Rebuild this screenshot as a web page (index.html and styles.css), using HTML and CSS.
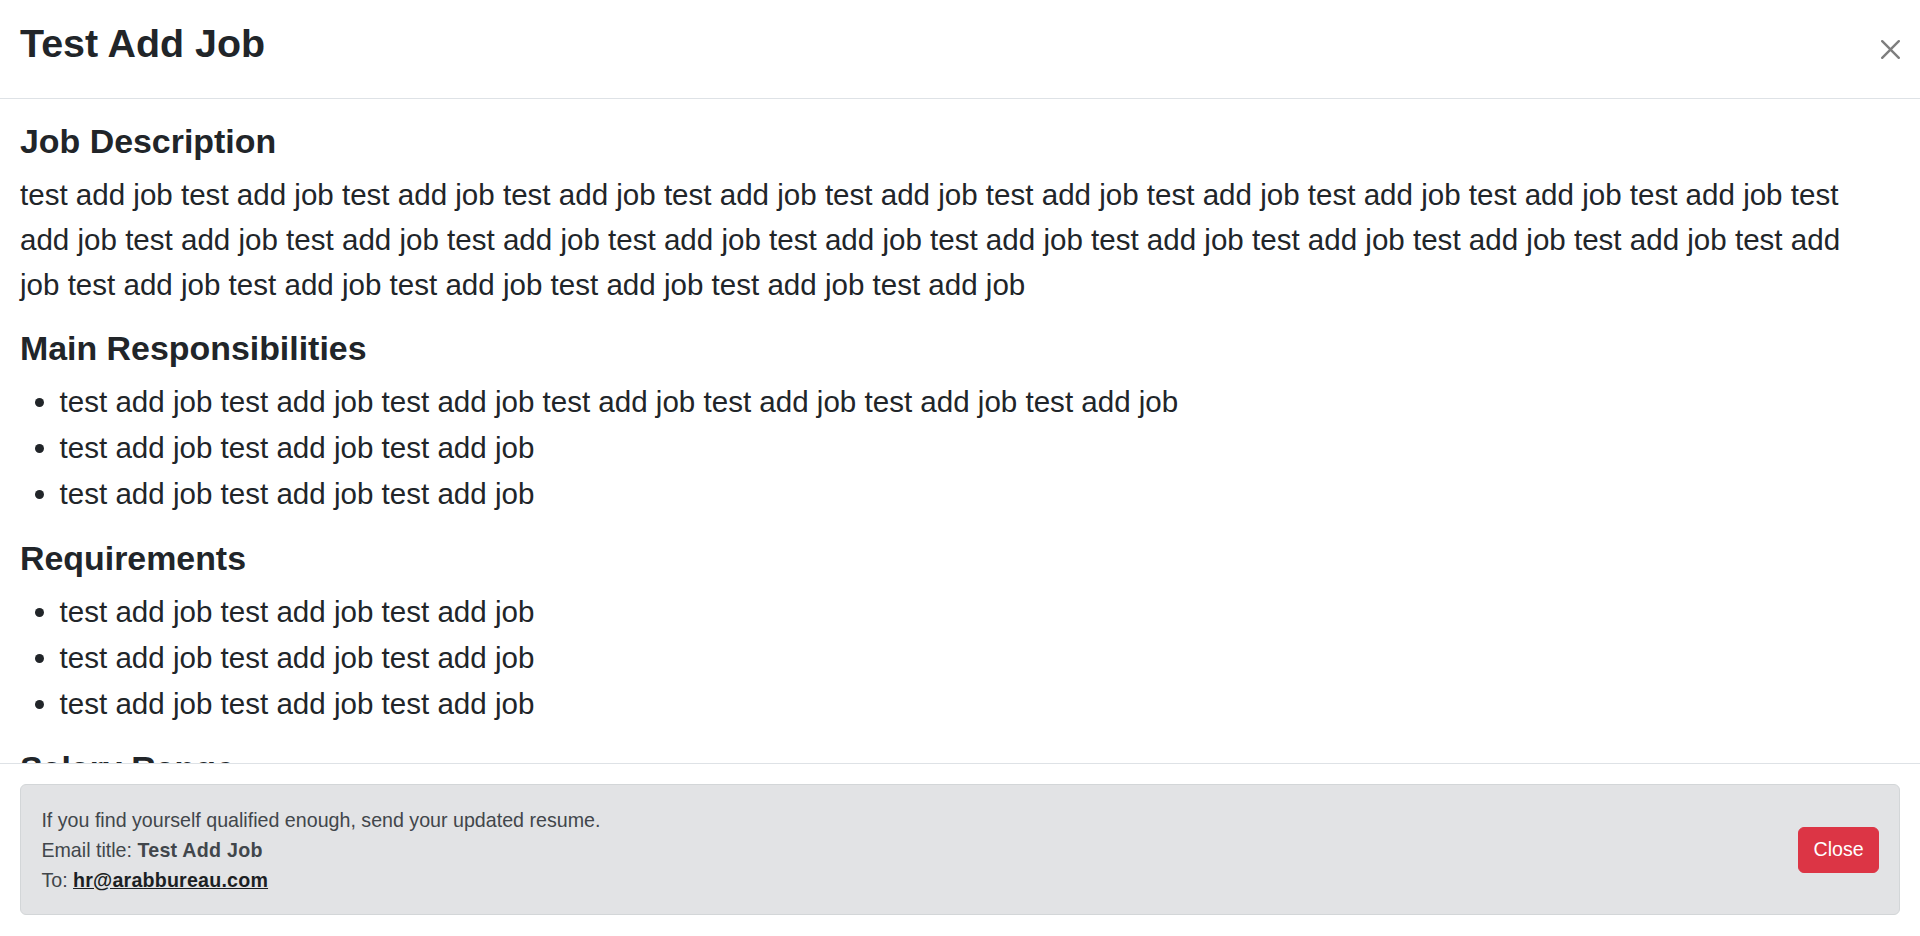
FILE: index.html
```html
<!DOCTYPE html>
<html lang="en">
<head>
<meta charset="utf-8">
<title>Test Add Job</title>
<link rel="stylesheet" href="styles.css">
</head>
<body>
<div class="modal">
  <header class="modal-header">
    <h1 class="modal-title">Test Add Job</h1>
    <button class="btn-close" type="button" aria-label="Close">
      <svg viewBox="0 0 16 16" width="19" height="19"><path d="M.293.293a1 1 0 0 1 1.414 0L8 6.586 14.293.293a1 1 0 1 1 1.414 1.414L9.414 8l6.293 6.293a1 1 0 0 1-1.414 1.414L8 9.414l-6.293 6.293a1 1 0 0 1-1.414-1.414L6.586 8 .293 1.707a1 1 0 0 1 0-1.414z"/></svg>
    </button>
  </header>
  <main class="modal-body">
    <h3 class="section-title">Job Description</h3>
    <p class="text">test add job test add job test add job test add job test add job test add job test add job test add job test add job test add job test add job test add job test add job test add job test add job test add job test add job test add job test add job test add job test add job test add job test add job test add job test add job test add job test add job test add job test add job</p>
    <h3 class="section-title">Main Responsibilities</h3>
    <ul class="list">
      <li>test add job test add job test add job test add job test add job test add job test add job</li>
      <li>test add job test add job test add job</li>
      <li>test add job test add job test add job</li>
    </ul>
    <h3 class="section-title">Requirements</h3>
    <ul class="list">
      <li>test add job test add job test add job</li>
      <li>test add job test add job test add job</li>
      <li>test add job test add job test add job</li>
    </ul>
    <h3 class="section-title">Salary Range</h3>
    <p class="text">1000 - 2000</p>
  </main>
  <footer class="modal-footer">
    <div class="alert">
      <div class="alert-text">
        <div class="alert-line">If you find yourself qualified enough, send your updated resume.</div>
        <div class="alert-line">Email title: <b>Test Add Job</b></div>
        <div class="alert-line">To: <a class="alert-link" href="#">hr@arabbureau.com</a></div>
      </div>
      <button class="btn-danger" type="button">Close</button>
    </div>
  </footer>
</div>
</body>
</html>
```

FILE: styles.css
```css
* { box-sizing: border-box; }
html, body {
  margin: 0;
  padding: 0;
  height: 100%;
  background: #fff;
}
body {
  font-family: "Liberation Sans", Arial, sans-serif;
  color: #212529;
  overflow: hidden;
}
.modal {
  display: flex;
  flex-direction: column;
  height: 936px;
  width: 1920px;
}
.modal-header {
  display: flex;
  align-items: flex-start;
  height: 99px;
  padding: 21px 20px 0 20px;
  border-bottom: 1px solid #dee2e6;
  flex-shrink: 0;
}
.modal-title {
  margin: 0;
  font-size: 39.4px;
  line-height: 45px;
  font-weight: 700;
  color: #212529;
}
.btn-close {
  margin-left: auto;
  align-self: center;
  margin-top: -21px;
  width: 19px;
  height: 19px;
  padding: 0;
  border: 0;
  background: transparent;
  opacity: .5;
  display: flex;
}
.btn-close svg { fill: #000; display: block; }
.modal-body {
  flex: 1;
  overflow: hidden;
  padding: 22px 48px 0 20px;
}
.section-title {
  margin: 0 0 10px 0;
  font-size: 33.9px;
  line-height: 41.2px;
  font-weight: 700;
}
.text {
  margin: 0 0 20.75px 0;
  font-size: 29.55px;
  line-height: 45px;
}
.list {
  margin: 0 0 20.75px 0;
  padding-left: 39.6px;
  font-size: 29.55px;
  line-height: 46px;
}
.modal-footer {
  flex-shrink: 0;
  border-top: 1px solid #dee2e6;
  padding: 20px 20px 21px 20px;
}
.alert {
  display: flex;
  align-items: center;
  justify-content: space-between;
  background: #e2e3e5;
  border: 1px solid #d3d6d8;
  border-radius: 6px;
  padding: 19.5px 20px 19.5px 20.4px;
  color: #41464b;
  font-size: 19.65px;
  line-height: 30px;
}
.alert-text b {
  font-weight: 700;
  letter-spacing: .25px;
}
.alert-link {
  color: #1c1f23;
  font-weight: 700;
  letter-spacing: .2px;
  text-decoration: underline;
}
.btn-danger {
  font-family: "Liberation Sans", Arial, sans-serif;
  background: #dc3545;
  color: #fff;
  border: 1px solid #dc3545;
  border-radius: 6px;
  font-size: 19.6px;
  line-height: 29px;
  padding: 7.5px 14.4px;
}
```
